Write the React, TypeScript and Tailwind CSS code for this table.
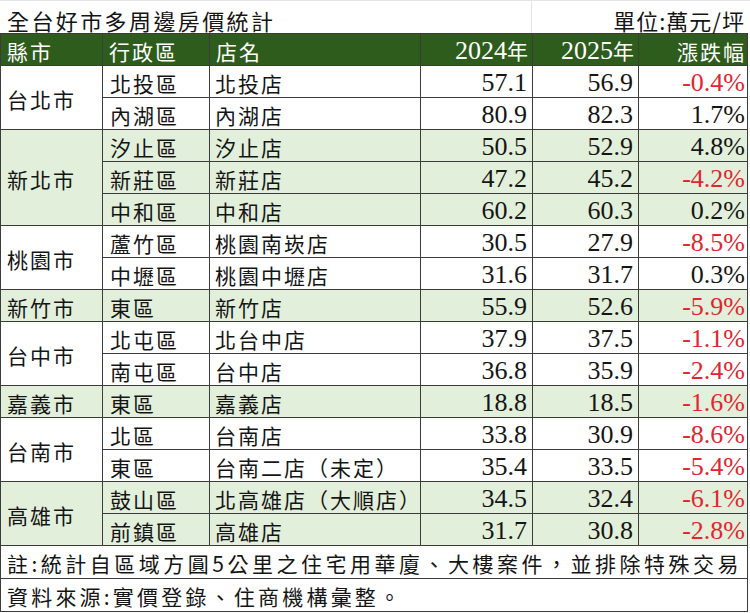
import React from 'react';

type Row = { dist: string; store: string; y24: string; y25: string; chg: string };
type Group = { city: string; green: boolean; rows: Row[] };

const groups: Group[] = [
  {
    city: '台北市',
    green: false,
    rows: [
      { dist: '北投區', store: '北投店', y24: '57.1', y25: '56.9', chg: '-0.4%' },
      { dist: '內湖區', store: '內湖店', y24: '80.9', y25: '82.3', chg: '1.7%' },
    ],
  },
  {
    city: '新北市',
    green: true,
    rows: [
      { dist: '汐止區', store: '汐止店', y24: '50.5', y25: '52.9', chg: '4.8%' },
      { dist: '新莊區', store: '新莊店', y24: '47.2', y25: '45.2', chg: '-4.2%' },
      { dist: '中和區', store: '中和店', y24: '60.2', y25: '60.3', chg: '0.2%' },
    ],
  },
  {
    city: '桃園市',
    green: false,
    rows: [
      { dist: '蘆竹區', store: '桃園南崁店', y24: '30.5', y25: '27.9', chg: '-8.5%' },
      { dist: '中壢區', store: '桃園中壢店', y24: '31.6', y25: '31.7', chg: '0.3%' },
    ],
  },
  {
    city: '新竹市',
    green: true,
    rows: [{ dist: '東區', store: '新竹店', y24: '55.9', y25: '52.6', chg: '-5.9%' }],
  },
  {
    city: '台中市',
    green: false,
    rows: [
      { dist: '北屯區', store: '北台中店', y24: '37.9', y25: '37.5', chg: '-1.1%' },
      { dist: '南屯區', store: '台中店', y24: '36.8', y25: '35.9', chg: '-2.4%' },
    ],
  },
  {
    city: '嘉義市',
    green: true,
    rows: [{ dist: '東區', store: '嘉義店', y24: '18.8', y25: '18.5', chg: '-1.6%' }],
  },
  {
    city: '台南市',
    green: false,
    rows: [
      { dist: '北區', store: '台南店', y24: '33.8', y25: '30.9', chg: '-8.6%' },
      { dist: '東區', store: '台南二店（未定）', y24: '35.4', y25: '33.5', chg: '-5.4%' },
    ],
  },
  {
    city: '高雄市',
    green: true,
    rows: [
      { dist: '鼓山區', store: '北高雄店（大順店）', y24: '34.5', y25: '32.4', chg: '-6.1%' },
      { dist: '前鎮區', store: '高雄店', y24: '31.7', y25: '30.8', chg: '-2.8%' },
    ],
  },
];

// family only; size + tracking set per cell so classes don't fight
const cjk = "font-['Noto_Sans_CJK_TC',sans-serif] leading-none";
const num = "font-['Liberation_Serif','Noto_Sans_CJK_TC',serif] text-[26px] leading-none";
const cell = 'border border-[#3c3c3c] h-[32px] p-0 pt-[3px] align-middle';

export default function App() {
  return (
    <div className="w-[750px] h-[613px] bg-white text-[#151515]">
      {/* title line */}
      <div className="flex h-[33px] border-t border-[#e4e4e4]">
        <div className={`w-[532px] border-r border-[#e4e4e4] pl-[7px] pt-[8px] ${cjk} text-[22px] tracking-[2.4px]`}>
          全台好市多周邊房價統計
        </div>
        <div className={`flex-1 pr-[5px] pt-[8px] text-right ${cjk} text-[22px] tracking-[1px]`}>
          單位:萬元/坪
        </div>
      </div>

      <table className="table-fixed border-collapse w-[747px]">
        <colgroup>
          <col className="w-[102px]" />
          <col className="w-[107px]" />
          <col className="w-[211px]" />
          <col className="w-[112px]" />
          <col className="w-[106px]" />
          <col className="w-[109px]" />
        </colgroup>
        <thead>
          <tr className="bg-[#2e5c1c] text-white">
            <th className={`${cell} text-left font-normal pl-[6px] ${cjk} text-[21px] tracking-[2px]`}>縣市</th>
            <th className={`${cell} text-left font-normal pl-[6px] ${cjk} text-[21px] tracking-[2px]`}>行政區</th>
            <th className={`${cell} text-left font-normal pl-[6px] ${cjk} text-[21px] tracking-[2px]`}>店名</th>
            <th className={`${cell} text-right font-normal pr-[4px] ${num}`}>
              2024<span className={`${cjk} text-[21px]`}>年</span>
            </th>
            <th className={`${cell} text-right font-normal pr-[4px] ${num}`}>
              2025<span className={`${cjk} text-[21px]`}>年</span>
            </th>
            <th className={`${cell} text-right font-normal pr-[1px] ${cjk} text-[21px] tracking-[2px]`}>漲跌幅</th>
          </tr>
        </thead>
        <tbody>
          {groups.map((g) =>
            g.rows.map((r, i) => (
              <tr key={g.city + r.dist + r.store} className={g.green ? 'bg-[#e2efda]' : 'bg-white'}>
                {i === 0 && (
                  <td rowSpan={g.rows.length} className={`${cell} pl-[6px] ${cjk} text-[21px] tracking-[2px]`}>
                    {g.city}
                  </td>
                )}
                <td className={`${cell} pl-[7px] ${cjk} text-[21px] tracking-[2px]`}>{r.dist}</td>
                <td className={`${cell} pl-[5px] ${cjk} text-[21px] tracking-[2px]`}>{r.store}</td>
                <td className={`${cell} text-right pr-[5px] ${num}`}>{r.y24}</td>
                <td className={`${cell} text-right pr-[5px] ${num}`}>{r.y25}</td>
                <td
                  className={`${cell} text-right pr-[2px] ${num} ${
                    r.chg.startsWith('-') ? 'text-[#e0262f]' : ''
                  }`}
                >
                  {r.chg}
                </td>
              </tr>
            ))
          )}
          <tr>
            <td colSpan={6} className={`${cell} h-[33px] pl-[6px] ${cjk} text-[21px] tracking-[3.5px]`}>
              註:統計自區域方圓5公里之住宅用華廈、大樓案件，並排除特殊交易
            </td>
          </tr>
          <tr>
            <td colSpan={6} className={`${cell} h-[33px] pl-[6px] ${cjk} text-[21px] tracking-[3.2px]`}>
              資料來源:實價登錄、住商機構彙整。
            </td>
          </tr>
        </tbody>
      </table>
    </div>
  );
}
